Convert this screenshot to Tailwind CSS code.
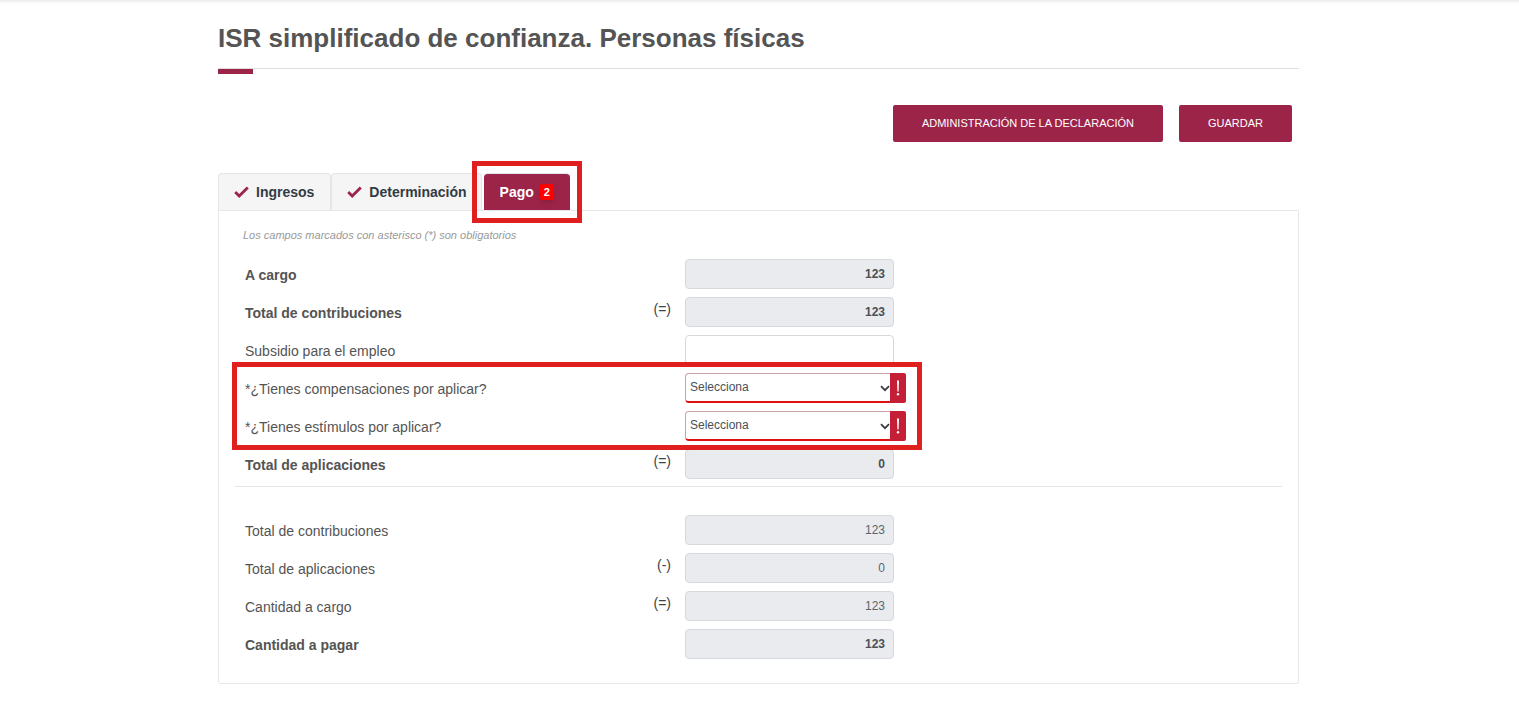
<!DOCTYPE html>
<html lang="es-MX">
<head>
    <meta charset="UTF-8">
    <meta name="viewport" content="width=device-width, initial-scale=1.0">
    <title>ISR simplificado de confianza. Personas físicas</title>
    <script src="https://cdn.jsdelivr.net/npm/@tailwindcss/browser@4"></script>
</head>
<body class="bg-white pr-0.5 text-[#545454] font-['Liberation_Sans',Arial,sans-serif]">

    <div class="h-1 -mr-0.5 bg-linear-to-b from-[#ececec] to-white"></div>

    <main class="max-w-[1081px] mx-auto pb-9">
        <header class="pt-[15px] border-b border-[#dddddd]">
            <h1 class="text-[26px] leading-[38px] pb-[11px] font-bold">ISR simplificado de confianza. Personas físicas</h1>
        </header>
        <div class="w-[35px] h-[5px] bg-[#9d2449]"></div>

        <div class="flex flex-wrap justify-end gap-4 mt-[31px] pr-[7px]">
            <button type="button" class="h-[37px] px-[29px] rounded-xs bg-[#9d2449] hover:bg-[#7d1c3a] text-white text-[11px]">ADMINISTRACIÓN DE LA DECLARACIÓN</button>
            <button type="button" class="h-[37px] px-[29px] rounded-xs bg-[#9d2449] hover:bg-[#7d1c3a] text-white text-[11px]">GUARDAR</button>
        </div>

        <!-- Pestañas -->
        <nav class="flex mt-[31px] text-[14px] font-bold text-[#333b44]">
            <a href="#ingresos" class="flex items-center gap-[7px] h-[37px] pl-[15px] pr-4 bg-[#f5f5f5] border border-b-0 border-[#e3e5e8] rounded-t">
                <svg class="w-[15px] h-[12px]" viewBox="0 0 15 12" fill="none" stroke="#9d2449" stroke-width="2.8"><path d="M1.2 6 L5.2 10 L13.8 1.4"/></svg>
                Ingresos
            </a>
            <a href="#determinacion" class="flex items-center gap-[7px] h-[37px] pl-[15px] pr-3.5 bg-[#f5f5f5] border border-b-0 border-[#e3e5e8] rounded-t">
                <svg class="w-[15px] h-[12px]" viewBox="0 0 15 12" fill="none" stroke="#9d2449" stroke-width="2.8"><path d="M1.2 6 L5.2 10 L13.8 1.4"/></svg>
                Determinación
            </a>
            <a href="#pago" class="relative flex items-center gap-1.5 h-[37px] ml-0.5 px-4 bg-[#9d2449] border-t border-[#e3e5e8] rounded-t text-white">
                Pago
                <span class="flex items-center justify-center w-[14px] h-[16px] rounded-xs bg-[#ff0000] text-[11px] shadow-md">2</span>
                <span class="absolute -top-[13px] -bottom-[13px] -left-3 -right-3 border-[5px] border-[#e01f1f] pointer-events-none"></span>
            </a>
        </nav>

        <form id="pago" class="border border-[#e5e7ea] rounded-b-xs px-4 pb-6">
            <p class="pl-2 pt-[15px] text-[11px] leading-[18px] italic text-[#999999]">Los campos marcados con asterisco (*) son obligatorios</p>

            <div class="flex flex-col gap-2 max-w-[659px] pl-2.5 pt-[15px] text-[14px]">
                <div class="grid grid-cols-[1fr_30px_209px] gap-x-3.5 h-[30px]">
                    <label for="a-cargo" class="self-center pt-0.5 font-bold">A cargo</label>
                    <span></span>
                    <input id="a-cargo" type="text" value="123" readonly class="w-full h-[30px] px-2 rounded-sm border border-[#d5d9de] bg-[#e9ebee] text-right text-[12px] font-bold text-[#495057]">
                </div>
                <div class="grid grid-cols-[1fr_30px_209px] gap-x-3.5 h-[30px]">
                    <label for="contribuciones" class="self-center pt-0.5 font-bold">Total de contribuciones</label>
                    <span class="text-right leading-6 text-[#3d4247]">(=)</span>
                    <input id="contribuciones" type="text" value="123" readonly class="w-full h-[30px] px-2 rounded-sm border border-[#d5d9de] bg-[#e9ebee] text-right text-[12px] font-bold text-[#495057]">
                </div>
                <div class="grid grid-cols-[1fr_30px_209px] gap-x-3.5 h-[30px]">
                    <label for="subsidio" class="self-center pt-0.5">Subsidio para el empleo</label>
                    <span></span>
                    <input id="subsidio" type="text" class="w-full h-[30px] px-2 rounded-sm border border-[#d5d9de] text-right text-[12px] text-[#495057]">
                </div>

                <!-- Campos obligatorios sin contestar -->
                <div class="relative flex flex-col gap-2">
                    <div class="grid grid-cols-[1fr_30px_209px] gap-x-3.5 h-[30px]">
                        <label for="compensaciones" class="self-center pt-0.5">*¿Tienes compensaciones por aplicar?</label>
                        <span></span>
                        <div class="relative">
                            <select id="compensaciones" class="appearance-none w-full h-[30px] px-1 pb-0.5 rounded-sm border border-b-2 border-[#c9a0a4] border-b-[#e01010] bg-white text-[12px] text-[#495057]">
                                <option>Selecciona</option>
                                <option>Sí</option>
                                <option>No</option>
                            </select>
                            <svg class="absolute right-1 top-3 w-[10px] h-[7px] pointer-events-none" viewBox="0 0 10 7" fill="none" stroke="#343a40" stroke-width="1.7"><path d="M1 1.2 L5 5.2 L9 1.2"/></svg>
                            <span class="absolute -right-3 top-0 flex items-center justify-center w-4 h-[30px] bg-[#c41f37] rounded-r-xs">
                                <svg class="w-[4px] h-[16px]" viewBox="0 0 4 16" fill="white"><path d="M1 0.5h2l-.4 11h-1.2z"/><circle cx="2" cy="14.3" r="1.2"/></svg>
                            </span>
                        </div>
                    </div>
                    <div class="grid grid-cols-[1fr_30px_209px] gap-x-3.5 h-[30px]">
                        <label for="estimulos" class="self-center pt-0.5">*¿Tienes estímulos por aplicar?</label>
                        <span></span>
                        <div class="relative">
                            <select id="estimulos" class="appearance-none w-full h-[30px] px-1 pb-0.5 rounded-sm border border-b-2 border-[#c9a0a4] border-b-[#e01010] bg-white text-[12px] text-[#495057]">
                                <option>Selecciona</option>
                                <option>Sí</option>
                                <option>No</option>
                            </select>
                            <svg class="absolute right-1 top-3 w-[10px] h-[7px] pointer-events-none" viewBox="0 0 10 7" fill="none" stroke="#343a40" stroke-width="1.7"><path d="M1 1.2 L5 5.2 L9 1.2"/></svg>
                            <span class="absolute -right-3 top-0 flex items-center justify-center w-4 h-[30px] bg-[#c41f37] rounded-r-xs">
                                <svg class="w-[4px] h-[16px]" viewBox="0 0 4 16" fill="white"><path d="M1 0.5h2l-.4 11h-1.2z"/><circle cx="2" cy="14.3" r="1.2"/></svg>
                            </span>
                        </div>
                    </div>
                    <span class="absolute -top-[11px] -bottom-[9px] -left-[13px] -right-[28px] z-10 border-[5px] border-[#e01f1f] pointer-events-none"></span>
                </div>

                <div class="grid grid-cols-[1fr_30px_209px] gap-x-3.5 h-[30px]">
                    <label for="aplicaciones" class="self-center pt-0.5 font-bold">Total de aplicaciones</label>
                    <span class="text-right leading-6 text-[#3d4247]">(=)</span>
                    <input id="aplicaciones" type="text" value="0" readonly class="w-full h-[30px] px-2 rounded-sm border border-[#d5d9de] bg-[#e9ebee] text-right text-[12px] font-bold text-[#495057]">
                </div>
            </div>

            <hr class="mt-[7px] border-[#e5e7ea]">

            <div class="flex flex-col gap-2 max-w-[659px] pl-2.5 pt-7 text-[14px]">
                <div class="grid grid-cols-[1fr_30px_209px] gap-x-3.5 h-[30px]">
                    <label for="contribuciones-2" class="self-center pt-0.5">Total de contribuciones</label>
                    <span></span>
                    <input id="contribuciones-2" type="text" value="123" readonly class="w-full h-[30px] px-2 rounded-sm border border-[#d5d9de] bg-[#e9ebee] text-right text-[12px] text-[#5c646c]">
                </div>
                <div class="grid grid-cols-[1fr_30px_209px] gap-x-3.5 h-[30px]">
                    <label for="aplicaciones-2" class="self-center pt-0.5">Total de aplicaciones</label>
                    <span class="text-right leading-6 text-[#3d4247]">(-)</span>
                    <input id="aplicaciones-2" type="text" value="0" readonly class="w-full h-[30px] px-2 rounded-sm border border-[#d5d9de] bg-[#e9ebee] text-right text-[12px] text-[#5c646c]">
                </div>
                <div class="grid grid-cols-[1fr_30px_209px] gap-x-3.5 h-[30px]">
                    <label for="cantidad-cargo" class="self-center pt-0.5">Cantidad a cargo</label>
                    <span class="text-right leading-6 text-[#3d4247]">(=)</span>
                    <input id="cantidad-cargo" type="text" value="123" readonly class="w-full h-[30px] px-2 rounded-sm border border-[#d5d9de] bg-[#e9ebee] text-right text-[12px] text-[#5c646c]">
                </div>
                <div class="grid grid-cols-[1fr_30px_209px] gap-x-3.5 h-[30px]">
                    <label for="cantidad-pagar" class="self-center pt-0.5 font-bold">Cantidad a pagar</label>
                    <span></span>
                    <input id="cantidad-pagar" type="text" value="123" readonly class="w-full h-[30px] px-2 rounded-sm border border-[#d5d9de] bg-[#e9ebee] text-right text-[12px] font-bold text-[#495057]">
                </div>
            </div>
        </form>
    </main>

</body>
</html>
